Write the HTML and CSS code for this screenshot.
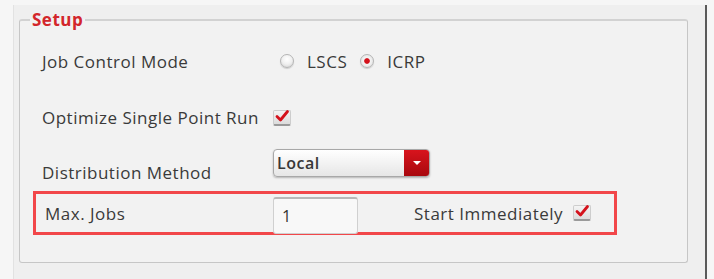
FILE: index.html
```html
<!DOCTYPE html>
<html lang="en">
<head>
    <meta charset="UTF-8">
    <title>Setup</title>
    <link rel="stylesheet" href="styles.css">
</head>
<body>
    <div class="window">
        <fieldset class="setup">
            <legend>Setup</legend>

            <div class="row row-mode">
                <span class="label">Job Control Mode</span>
                <div class="control radios">
                    <label class="radio"><span class="dot"></span>LSCS</label>
                    <label class="radio checked"><span class="dot"></span>ICRP</label>
                </div>
            </div>

            <div class="row row-optimize">
                <span class="label">Optimize Single Point Run</span>
                <div class="control">
                    <span class="check">
                        <svg viewBox="0 0 16 16" width="16" height="16"><path d="M3 8.5 L6.5 12 L13.5 3.5" fill="none" stroke="#d4121c" stroke-width="2.8" stroke-linecap="round" stroke-linejoin="round"/></svg>
                    </span>
                </div>
            </div>

            <div class="row row-dist">
                <span class="label">Distribution Method</span>
                <div class="control">
                    <div class="dropdown">
                        <span class="value">Local</span>
                        <span class="arrow"></span>
                    </div>
                </div>
            </div>

            <div class="row row-jobs">
                <span class="label">Max. Jobs</span>
                <div class="control">
                    <input class="jobs" type="text" value="1">
                </div>
                <span class="start">Start Immediately</span>
                <span class="check">
                    <svg viewBox="0 0 16 16" width="16" height="16"><path d="M3 8.5 L6.5 12 L13.5 3.5" fill="none" stroke="#d4121c" stroke-width="2.8" stroke-linecap="round" stroke-linejoin="round"/></svg>
                </span>
            </div>
        </fieldset>
    </div>
</body>
</html>
```

FILE: styles.css
```css
body {
    margin: 0;
    background-color: #f6f6f6;
    font-family: "Open Sans", "DejaVu Sans", sans-serif;
    font-size: 17px;
    letter-spacing: 0.5px;
    color: #3a3a3a;
}

.window {
    margin: 5px 0 0 13px;
    width: 694px;
    height: 274px;
    box-sizing: border-box;
    padding: 5px 0 0 5px;
    background-color: #efefef;
    border-left: 1px solid #e2e2e2;
    border-right: 2px solid #5a5a5a;
}

.setup {
    margin: 0;
    padding: 16px 0 0 22px;
    width: 669px;
    height: 253px;
    box-sizing: border-box;
    min-width: 0;
    border: 1px solid #c6c6c6;
    border-top: 2px solid #d2d2d2;
    border-radius: 3px;
    background-color: #f2f2f2;
}

.setup legend {
    margin-left: -12px;
    padding: 0 2px;
    font-size: 17px;
    font-weight: bold;
    line-height: 20px;
    letter-spacing: 0.5px;
    color: #d3262b;
}

.row {
    display: flex;
    align-items: center;
}

.label {
    width: 231px;
    flex-shrink: 0;
}

.row-mode {
    height: 30px;
}

.row-optimize {
    height: 30px;
    margin-top: 26px;
}

.row-dist {
    height: 30px;
    margin-top: 19px;
}

.row-dist .label {
    padding-top: 12px;
}

.radios {
    display: flex;
    gap: 13px;
    padding-left: 7px;
}

.radio {
    display: flex;
    align-items: center;
    gap: 13px;
}

.dot {
    width: 14px;
    height: 14px;
    border-radius: 50%;
    border: 1px solid #b5b5b5;
    background: radial-gradient(circle at 50% 35%, #ffffff 0%, #f0f0f0 50%, #cfcfcf 100%);
    box-shadow: 0 1px 1px rgba(0, 0, 0, 0.15);
    box-sizing: border-box;
}

.radio.checked .dot {
    background: radial-gradient(circle, #d4121c 0%, #d4121c 28%, #f4f4f4 38%, #e4e4e4 80%, #c8c8c8 100%);
}

.check {
    display: inline-flex;
    align-items: center;
    justify-content: center;
    flex-shrink: 0;
    width: 18px;
    height: 16px;
    box-sizing: border-box;
    background: linear-gradient(#f4f4f4, #dcdcdc);
    border: 1px solid #cdcdcd;
    border-bottom: 2px solid #9a9a9a;
    border-radius: 2px;
}

.check svg {
    margin-top: -3px;
}

.dropdown {
    display: flex;
    width: 157px;
    height: 28px;
    box-sizing: border-box;
    border: 1px solid #a8a8a8;
    border-radius: 4px;
    background: linear-gradient(#ffffff, #e6e6e6);
    box-shadow: 0 1px 2px rgba(0, 0, 0, 0.25);
    overflow: hidden;
    margin-top: -6px;
}

.dropdown .value {
    flex: 1;
    padding-left: 3px;
    line-height: 26px;
    font-size: 16px;
    font-weight: 600;
    color: #383838;
}

.dropdown .arrow {
    width: 25px;
    background: linear-gradient(#d8141d, #a8080e);
    position: relative;
}

.dropdown .arrow::after {
    content: "";
    position: absolute;
    left: 9px;
    top: 11px;
    border-left: 4px solid transparent;
    border-right: 4px solid transparent;
    border-top: 4px solid #ffffff;
}

.row-jobs {
    height: 44px;
    width: 584px;
    margin: 10px 0 0 -9px;
    padding-left: 9px;
    box-sizing: border-box;
    border: 3px solid #f2474a;
}

.row-jobs .label {
    width: 228px;
}

.jobs {
    width: 85px;
    height: 37px;
    margin-top: 5px;
    box-sizing: border-box;
    padding: 0 8px;
    font-family: inherit;
    font-size: 16px;
    color: #333;
    background-color: #f8f8f8;
    border: 1px solid #d0d0d0;
    border-top: 2px solid #b8b8b8;
    border-radius: 3px;
    outline: none;
}

.start {
    margin-left: 56px;
    margin-right: 10px;
    white-space: nowrap;
}
```
